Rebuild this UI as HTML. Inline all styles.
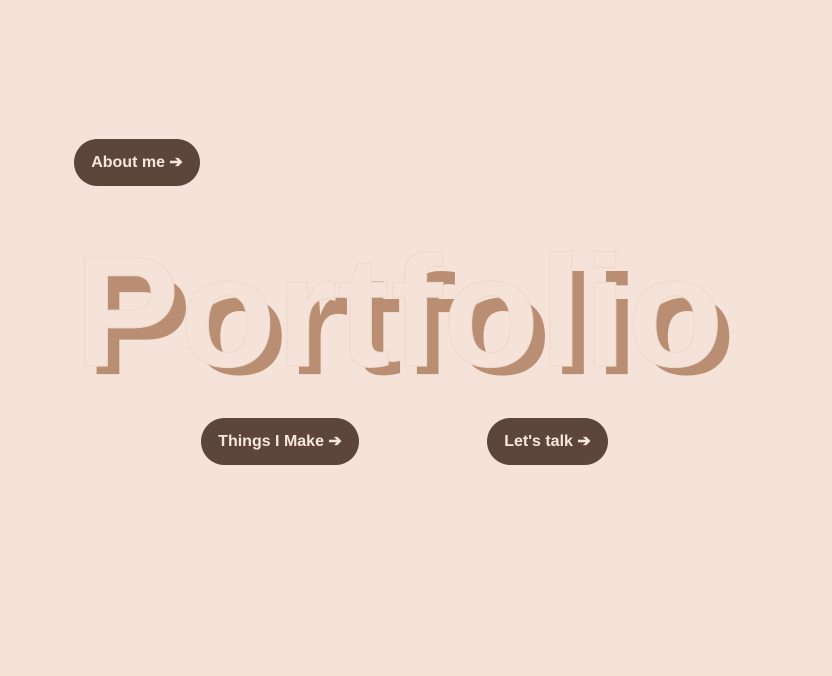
<!DOCTYPE html>
<html><head><meta charset="utf-8"><style>
html,body{margin:0;padding:0;background:#f5e3d9;width:832px;height:676px;overflow:hidden;position:relative;font-family:"Liberation Sans",sans-serif}
.t{position:absolute;font-family:"Liberation Sans",sans-serif;font-weight:bold;font-size:158px;line-height:158px;white-space:nowrap;margin:0}
.sh{left:86px;top:241px;color:#b98e72;transform:scaleY(0.9);transform-origin:0 134px}
.mn{left:74px;top:233px;color:#f5e3d9;-webkit-text-stroke:1.2px #eddacd}
.b{position:absolute;height:47px;border-radius:24px;background:#5c463b;color:#f7e6da;font-weight:bold;font-size:16px;line-height:47px;text-align:center}
</style></head><body>
<div class="b" style="left:74px;top:139px;width:126px">About me ➔</div>
<div class="t sh">Portfolio</div>
<div class="t mn">Portfolio</div>
<div class="b" style="left:201px;top:418px;width:158px">Things I Make ➔</div>
<div class="b" style="left:487px;top:418px;width:121px">Let's talk ➔</div>
</body></html>
